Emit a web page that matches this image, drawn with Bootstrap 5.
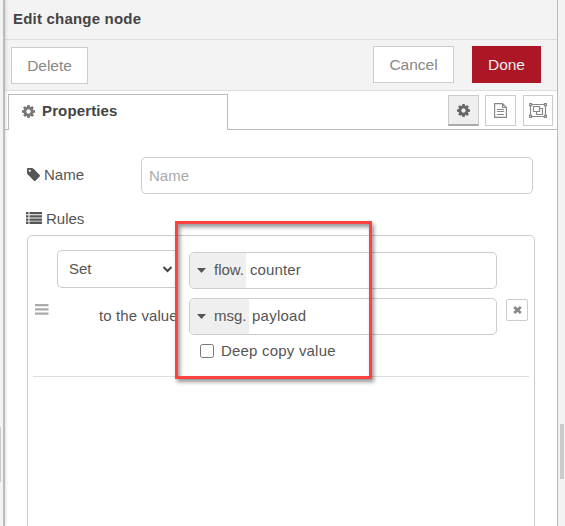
<!DOCTYPE html>
<html lang="en">
<head>
<meta charset="utf-8">
<title>Edit change node</title>
<meta name="viewport" content="width=device-width, initial-scale=1">
<link href="https://cdn.jsdelivr.net/npm/bootstrap@5.3.0/dist/css/bootstrap.min.css" rel="stylesheet">
<style>
  body { font-family: "Liberation Sans", Arial, sans-serif; font-size: 15px; line-height: 20px; color: #555; background: #f3f3f3; height: 526px; overflow: hidden; }
  svg { display: block; flex: none; }
  .edge-left { width: 5px; background: #f3f3f3; border-right: 2px solid #bbb; box-shadow: 1px 0 3px rgba(0,0,0,.12); z-index: 1; }
  .edge-scroll { width: 1px; height: 55px; margin-top: 427px; background: #ccc; }
  .edge-right { width: 7px; padding: 424px 0 0 2px; }
  .edge-thumb { width: 4px; height: 55px; background: #cbcbcb; }
  .tray { width: 553px; border-right: 1px solid #bbb; }
  .tray-title { height: 40px; background: #f3f3f3; border-bottom: 1px solid #ddd; padding: 0 0 1px 8px; color: #444; letter-spacing: .2px; }
  .tray-bar { height: 51px; background: #f3f3f3; border-bottom: 1px solid #ddd; padding: 6px 16px 0 6px; }
  .tray-bar .btn { height: 37px; border-radius: 0; border: 1px solid #ccc; background: #fff; color: #888; font-size: 15.5px; letter-spacing: -.02px; line-height: 20px; padding: 1px 0 0; }
  .tray-bar .btn.primary { background: #ad1625; border-color: #ad1625; color: #eee; }
  .w-delete { width: 77px; margin-top: 1px; } .w-cancel { width: 81px; margin-right: 18px; } .w-done { width: 69px; }
  .tray-tabs { height: 39px; border-bottom: 1px solid #bbb; padding: 3px 4px 0 3px; }
  .tab-main { width: 220px; height: 36px; border: 1px solid #bbb; border-bottom: 0; background: #fff; padding: 0 0 3px 13px; gap: 7px; color: #444; letter-spacing: .13px; }
  .tab-icons { gap: 6px; }
  .tab-icon { width: 31px; height: 31px; margin-top: 1px; border: 1px solid #ccc; color: #888; }
  .tab-icon:nth-child(3) { width: 30px; margin-left: 1px; }
  .tab-icon.chosen { background: #efefef; border-bottom: 2px solid #aaa; color: #666; }
  .form-area { padding: 27px 22px 0; }
  .form-area .form-control, .form-area .form-select, .typed { height: 37px; border: 1px solid #ccc; border-radius: 5px; font-size: 15px; color: #555; background-color: #fff; }
  .form-area .form-control { width: 392px; padding: 0 7px; }
  .form-control::placeholder { color: #aaa; opacity: 1; }
  .name-label { width: 114px; gap: 4px; padding-bottom: 2px; }
  .rules-label { margin-top: 15px; gap: 4px; }
  .rules-label svg { margin: -2px 0 0 -1px; width: 16px; }
  .rule-list { height: 310px; margin-top: 6px; border: 1px solid #ccc; border-radius: 5px; padding: 0 5px; }
  .rule { height: 141px; border-bottom: 1px solid #ddd; }
  .handle { width: 24px; padding: 68px 0 0 2px; }
  .kinds { width: 132px; padding-top: 14px; }
  .form-area .form-select { width: 121px; height: 38px; padding: 1px 11px 0; background-position: right 5px center; background-size: 11px; background-image: url("data:image/svg+xml,%3csvg xmlns='http://www.w3.org/2000/svg' viewBox='0 0 11 8'%3e%3cpath fill='none' stroke='%23444' stroke-width='2' d='M1.5 2l4 4 4-4'/%3e%3c/svg%3e"); border-right: 0; border-top-right-radius: 0; border-bottom-right-radius: 0; }
  .to-label { padding: 18px 0 0 42px; letter-spacing: .1px; white-space: nowrap; }
  .values { width: 308px; padding-top: 16px; }
  .typed { overflow: hidden; }
  .typed + .typed { margin-top: 9px; }
  .typed-kind { background: #efefef; padding: 0 0 1px 7px; gap: 8px; height: 100%; }
  .flow-kind { width: 56px; } .msg-kind { width: 59px; }
  .typed-text { padding: 0 0 2px 4px; letter-spacing: .1px; }
  .msg-kind + .typed-text { padding-left: 3px; letter-spacing: .25px; }
  .deep { margin: 6px 0 0 11px; gap: 7px; letter-spacing: .2px; }
  .deep .form-check-input { width: 14px; height: 14px; margin: 0; border: 1px solid #767676; border-radius: 2.5px; }
  .remove-rule { width: 22px; height: 22px; margin: 63px 0 0 9px; border: 1px solid #ccc; border-radius: 2px; background: #fff; color: #888; }
  .highlight { left: 175px; top: 221px; width: 197px; height: 158px; border: 3px solid #ff4142; box-shadow: 2px 3px 4px rgba(0,0,0,.42), inset 2px 3px 4px rgba(0,0,0,.42); z-index: 3; pointer-events: none; }
</style>
<script src="https://cdn.jsdelivr.net/npm/bootstrap@5.3.0/dist/js/bootstrap.bundle.min.js"></script>
</head>
<body class="position-relative">
<svg width="0" height="0" class="position-absolute">
  <symbol id="gear" viewBox="128 128 1536 1536"><path fill="currentColor" d="M1152 896q0-106-75-181t-181-75-181 75-75 181 75 181 181 75 181-75 75-181zm512-109v222q0 12-8 23t-20 13l-185 28q-19 54-39 91 35 50 107 138 10 12 10 25t-9 23q-27 37-99 108t-94 71q-12 0-26-9l-138-108q-44 23-91 38-16 136-29 186-7 28-36 28h-222q-14 0-24.500-8.500t-11.500-21.500l-28-184q-49-16-90-37l-141 107q-10 9-25 9-14 0-25-11-126-114-165-168-7-10-7-23 0-12 8-23 15-21 51-66.500t54-70.500q-27-50-41-99l-183-27q-13-2-21-12.500t-8-23.500v-222q0-12 8-23t19-13l186-28q14-46 39-92-40-57-107-138-10-12-10-24 0-10 9-23 26-36 98.500-107.500t94.500-71.500q13 0 26 10l138 107q44-23 91-38 16-136 29-186 7-28 36-28h222q14 0 24.500 8.500t11.500 21.500l28 184q49 16 90 37l142-107q9-9 24-9 13 0 25 10 129 119 165 170 7 8 7 22 0 12-8 23-15 21-51 66.500t-54 70.500q26 50 41 98l183 28q13 2 21 12.500t8 23.500z"/></symbol>
</svg>
<div class="d-flex h-100">
  <div class="edge-left flex-shrink-0"><div class="edge-scroll"></div></div>
  <main class="tray bg-white flex-shrink-0 overflow-hidden">
    <header class="tray-title d-flex align-items-center fw-bold">Edit change node</header>
    <div class="tray-bar d-flex align-items-start">
      <button class="btn w-delete me-auto">Delete</button>
      <button class="btn w-cancel">Cancel</button>
      <button class="btn primary w-done">Done</button>
    </div>
    <div class="tray-tabs d-flex">
      <div class="tab-main d-flex align-items-center fw-bold me-auto">
        <svg width="13" height="13" color="#777"><use href="#gear"/></svg>Properties
      </div>
      <div class="tab-icons d-flex">
        <div class="tab-icon chosen d-flex align-items-center justify-content-center"><svg width="13" height="13"><use href="#gear"/></svg></div>
        <div class="tab-icon d-flex align-items-center justify-content-center">
          <svg width="13" height="15" viewBox="0 0 13 15" fill="none" stroke="currentColor" stroke-width="1.200"><path d="M.6.6h7.900l3.900 4v9.800H.6zM8.500.5v4h4M3 6.500h7M3 8.500h7M3 11.500h7"/></svg>
        </div>
        <div class="tab-icon d-flex align-items-center justify-content-center">
          <svg width="18" height="15" viewBox="0 0 18 15" fill="none" stroke="currentColor" stroke-width="1.200"><path d="M3 1.500h12M3 13.500h12M1.500 3v9M16.500 3v9M.6.6h2v2h-2zM15.400.6h2v2h-2zM.6 12.400h2v2h-2zM15.400 12.400h2v2h-2zM4.500 3.500h6v5h-6zM10.500 5.500h3v6h-6v-3"/></svg>
        </div>
      </div>
    </div>
    <form class="form-area">
      <div class="d-flex align-items-center">
        <label class="name-label d-flex align-items-center" for="nodeName">
          <svg width="13" height="13" viewBox="128 128 1516 1516"><path fill="currentColor" d="M576 448q0-53-37.500-90.500t-90.500-37.500-90.500 37.500-37.500 90.500 37.500 90.500 90.500 37.500 90.500-37.500 37.500-90.500zm1067 576q0 53-37 90l-491 492q-39 37-91 37-53 0-90-37l-715-716q-38-37-64.500-101t-26.500-117v-416q0-52 38-90t90-38h416q53 0 117 26.500t102 64.500l715 714q37 39 37 91z"/></svg>Name
        </label>
        <input id="nodeName" class="form-control" placeholder="Name">
      </div>
      <div class="rules-label d-flex align-items-center">
        <svg width="16" height="12" viewBox="0 0 16 12"><path fill="currentColor" d="M0 0h2.500v2.300H0zM3.500 0H16v2.300H3.500zM0 3.200h2.500v2.300H0zM3.500 3.200H16v2.300H3.500zM0 6.400h2.500v2.300H0zM3.500 6.400H16v2.300H3.500zM0 9.600h2.500v2.300H0zM3.500 9.600H16v2.300H3.500z"/></svg>Rules
      </div>
      <div class="rule-list">
        <div class="rule d-flex align-items-start">
          <div class="handle flex-shrink-0"><svg width="14" height="11" viewBox="0 0 14 11"><path fill="#aaa" d="M0 0h13.500v2.200H0zM0 4.300h13.500v2.200H0zM0 8.600h13.500v2.200H0z"/></svg></div>
          <div class="kinds flex-shrink-0">
            <select class="form-select" aria-label="Action"><option>Set</option></select>
            <div class="to-label">to the value</div>
          </div>
          <div class="values flex-shrink-0">
            <div class="typed d-flex align-items-center">
              <div class="typed-kind flow-kind d-flex align-items-center"><svg width="9" height="5" viewBox="0 0 9 5"><path fill="currentColor" d="M0 0h9L4.500 5z"/></svg>flow.</div>
              <span class="typed-text">counter</span>
            </div>
            <div class="typed d-flex align-items-center">
              <div class="typed-kind msg-kind d-flex align-items-center"><svg width="9" height="5" viewBox="0 0 9 5"><path fill="currentColor" d="M0 0h9L4.500 5z"/></svg>msg.</div>
              <span class="typed-text">payload</span>
            </div>
            <div class="deep d-flex align-items-center"><input class="form-check-input" type="checkbox" id="deepCopy"><label for="deepCopy">Deep copy value</label></div>
          </div>
          <button type="button" class="remove-rule d-flex align-items-center justify-content-center p-0 flex-shrink-0" aria-label="Remove rule">
            <svg width="9" height="8" viewBox="0 0 9 8"><path stroke="currentColor" stroke-width="2.700" d="M1.200 1l6.600 6M7.800 1L1.200 7"/></svg>
          </button>
        </div>
      </div>
    </form>
  </main>
  <div class="edge-right flex-shrink-0"><div class="edge-thumb"></div></div>
</div>
<div class="highlight position-absolute"></div>
</body>
</html>
